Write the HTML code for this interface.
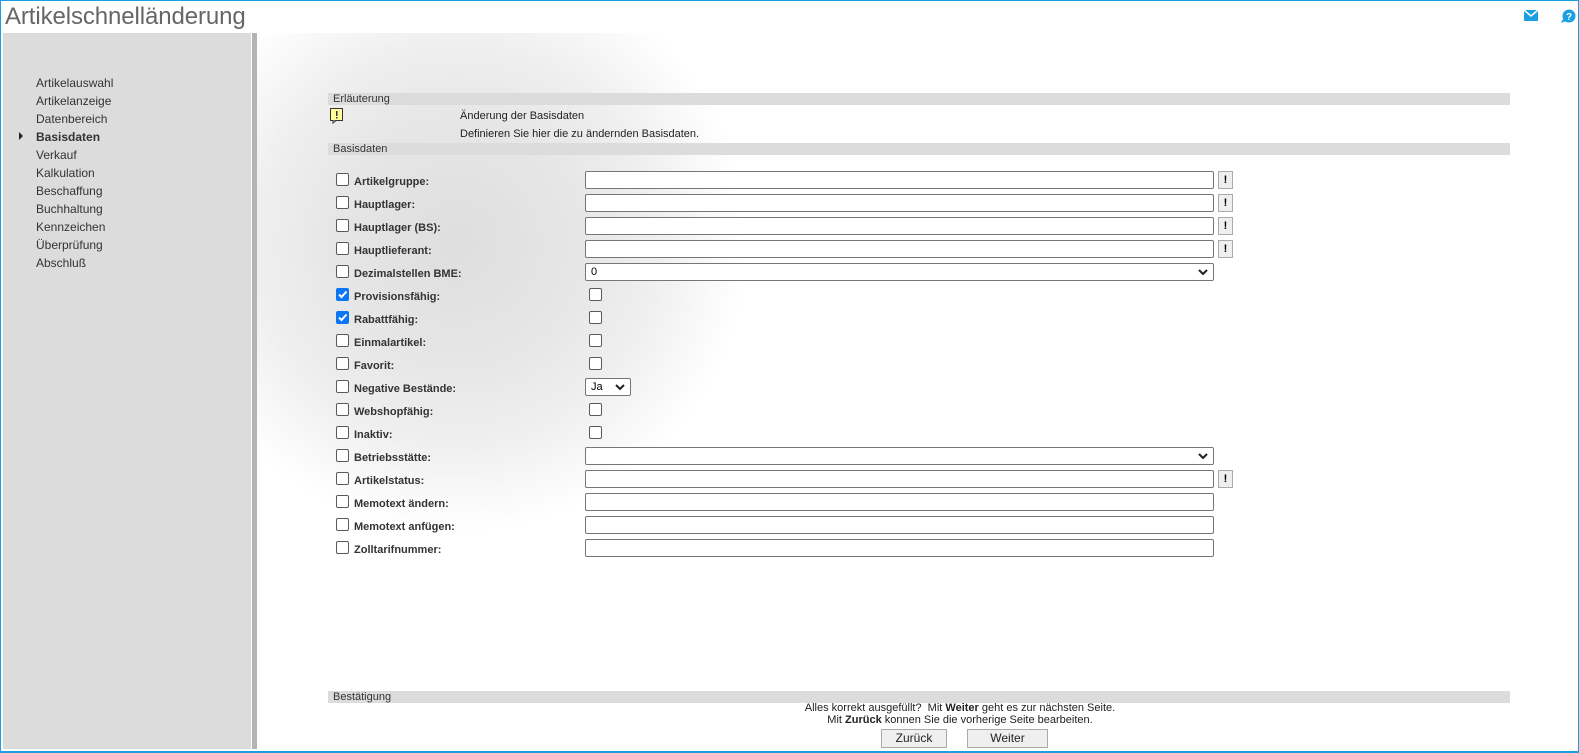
<!DOCTYPE html>
<html><head><meta charset="utf-8"><style>
*{margin:0;padding:0;box-sizing:border-box}
body{width:1579px;height:753px;overflow:hidden;font-family:"Liberation Sans",Arial,sans-serif;background:#fff;position:relative}
.frame{position:absolute;left:0;top:0;width:1579px;height:753px;border:1px solid #1aa0e0;border-bottom-width:2px}
.a{position:absolute}
.title{left:5px;top:3px;font-size:24px;color:#666;white-space:nowrap;letter-spacing:-0.1px}
.side{left:3px;top:33px;width:248px;height:716px;background:#dcdcdc}
.sbar{left:252px;top:33px;width:5px;height:716px;background:#b4b4b4}
.nav{left:36px;font-size:12px;color:#333}
.bar{left:328px;width:1182px;height:12px;background:#dcdcdc;font-size:11px;color:#333;padding-left:5px;line-height:12px}
.cb{width:13px;height:13px;border:1px solid #5a5a5a;border-radius:2px;background:#fff}
.cb.on{background:#0b75f5;border-color:#0b75f5}
.lbl{left:354px;font-size:11px;font-weight:bold;color:#333}
.inp{left:585px;width:629px;height:18px;border:1px solid #767676;border-radius:2px;background:#fff}
.btn{left:1218px;width:15px;height:18px;border:1px solid #aaa;background:#efefef;font-size:11px;font-weight:bold;text-align:center;line-height:16px}
.txt{font-size:11px;color:#222}
.pb{height:19px;border:1px solid #aaa;background:#efefef;font-size:12px;text-align:center;line-height:17px;color:#222}
</style></head><body>
<div class="a" style="left:257px;top:33px;width:650px;height:560px;background:radial-gradient(circle at 200px 210px,#dedede 0,#e6e6e6 120px,#efefef 200px,#f8f8f8 250px,#fff 290px)"></div>
<div class="frame"></div>
<div class="a title">Artikelschnelländerung</div>
<svg class="a" style="left:1524px;top:10px" width="14" height="11" viewBox="0 0 14 11"><rect width="14" height="11" fill="#1aa0e0"/><path d="M0 0 L7 6 L14 0" stroke="#fff" stroke-width="1.5" fill="none"/></svg>
<svg class="a" style="left:1560px;top:9px" width="16" height="14" viewBox="0 0 16 14"><circle cx="9" cy="7" r="6.5" fill="#1aa0e0"/><path d="M3 10 L1 14 L6 12Z" fill="#1aa0e0"/><text x="9" y="11" font-size="10" font-weight="bold" fill="#fff" text-anchor="middle" font-family="Liberation Sans">?</text></svg>
<div class="a side"></div><div class="a sbar"></div>
<div class="a nav" style="top:76px">Artikelauswahl</div>
<div class="a nav" style="top:94px">Artikelanzeige</div>
<div class="a nav" style="top:112px">Datenbereich</div>
<div class="a" style="left:19px;top:132px;width:0;height:0;border-left:4px solid #222;border-top:4px solid transparent;border-bottom:4px solid transparent"></div>
<div class="a nav" style="top:130px;font-weight:bold">Basisdaten</div>
<div class="a nav" style="top:148px">Verkauf</div>
<div class="a nav" style="top:166px">Kalkulation</div>
<div class="a nav" style="top:184px">Beschaffung</div>
<div class="a nav" style="top:202px">Buchhaltung</div>
<div class="a nav" style="top:220px">Kennzeichen</div>
<div class="a nav" style="top:238px">Überprüfung</div>
<div class="a nav" style="top:256px">Abschluß</div>
<div class="a bar" style="top:93px">Erläuterung</div>
<svg class="a" style="left:330px;top:108px" width="14" height="16" viewBox="0 0 14 16"><rect x="0.5" y="0.5" width="12" height="12" fill="#ffff9a" stroke="#333"/><path d="M3 12.5 L3 15 L6 12.5" fill="#fff" stroke="#333"/><rect x="6" y="3" width="1.5" height="5" fill="#333"/><rect x="6" y="9" width="1.5" height="1.5" fill="#333"/></svg>
<div class="a txt" style="left:460px;top:110px">Änderung der Basisdaten</div>
<div class="a txt" style="left:460px;top:128px">Definieren Sie hier die zu ändernden Basisdaten.</div>
<div class="a bar" style="top:143px">Basisdaten</div>
<div id="rows"></div>
<div class="a bar" style="top:691px">Bestätigung</div>
<div class="a txt" style="left:710px;width:500px;text-align:center;top:702px;font-size:11px">Alles korrekt ausgefüllt?&nbsp; Mit <b>Weiter</b> geht es zur nächsten Seite.</div>
<div class="a txt" style="left:710px;width:500px;text-align:center;top:714px;font-size:11px">Mit <b>Zurück</b> konnen Sie die vorherige Seite bearbeiten.</div>
<div class="a pb" style="left:881px;top:729px;width:66px">Zurück</div>
<div class="a pb" style="left:967px;top:729px;width:81px">Weiter</div>
<script>
var rows=[["Artikelgruppe:","i",1,0],["Hauptlager:","i",1,0],["Hauptlager (BS):","i",1,0],["Hauptlieferant:","i",1,0],["Dezimalstellen BME:","s",0,0],["Provisionsfähig:","c",0,1],["Rabattfähig:","c",0,1],["Einmalartikel:","c",0,0],["Favorit:","c",0,0],["Negative Bestände:","j",0,0],["Webshopfähig:","c",0,0],["Inaktiv:","c",0,0],["Betriebsstätte:","s2",0,0],["Artikelstatus:","i",1,0],["Memotext ändern:","i",0,0],["Memotext anfügen:","i",0,0],["Zolltarifnummer:","i",0,0]];
var h="",chev='<svg class="a" style="right:5px;top:5px" width="10" height="7" viewBox="0 0 10 7"><path d="M1 1 L5 5 L9 1" stroke="#222" stroke-width="2" fill="none"/></svg>';
rows.forEach(function(r,i){var y=171+i*23;
h+='<div class="a cb'+(r[3]?' on':'')+'" style="left:336px;top:'+(y+2)+'px">'+(r[3]?'<svg width="11" height="11" viewBox="0 0 11 11" style="display:block"><path d="M2 5.5 L4.5 8 L9.5 2.5" stroke="#fff" stroke-width="2" fill="none"/></svg>':'')+'</div>';
h+='<div class="a lbl" style="top:'+(y+5)+'px">'+r[0]+'</div>';
if(r[1]=="i")h+='<div class="a inp" style="top:'+y+'px"></div>';
if(r[1]=="s")h+='<div class="a inp" style="top:'+y+'px;font-size:11px;padding:2px 0 0 5px">0'+chev+'</div>';
if(r[1]=="s2")h+='<div class="a inp" style="top:'+y+'px">'+chev+'</div>';
if(r[1]=="j")h+='<div class="a inp" style="top:'+y+'px;width:46px;font-size:11px;padding:2px 0 0 5px">Ja'+chev+'</div>';
if(r[1]=="c")h+='<div class="a cb" style="left:589px;top:'+(y+2)+'px"></div>';
if(r[2])h+='<div class="a btn" style="top:'+y+'px">!</div>';
});
document.getElementById("rows").innerHTML=h;
</script>
</body></html>
